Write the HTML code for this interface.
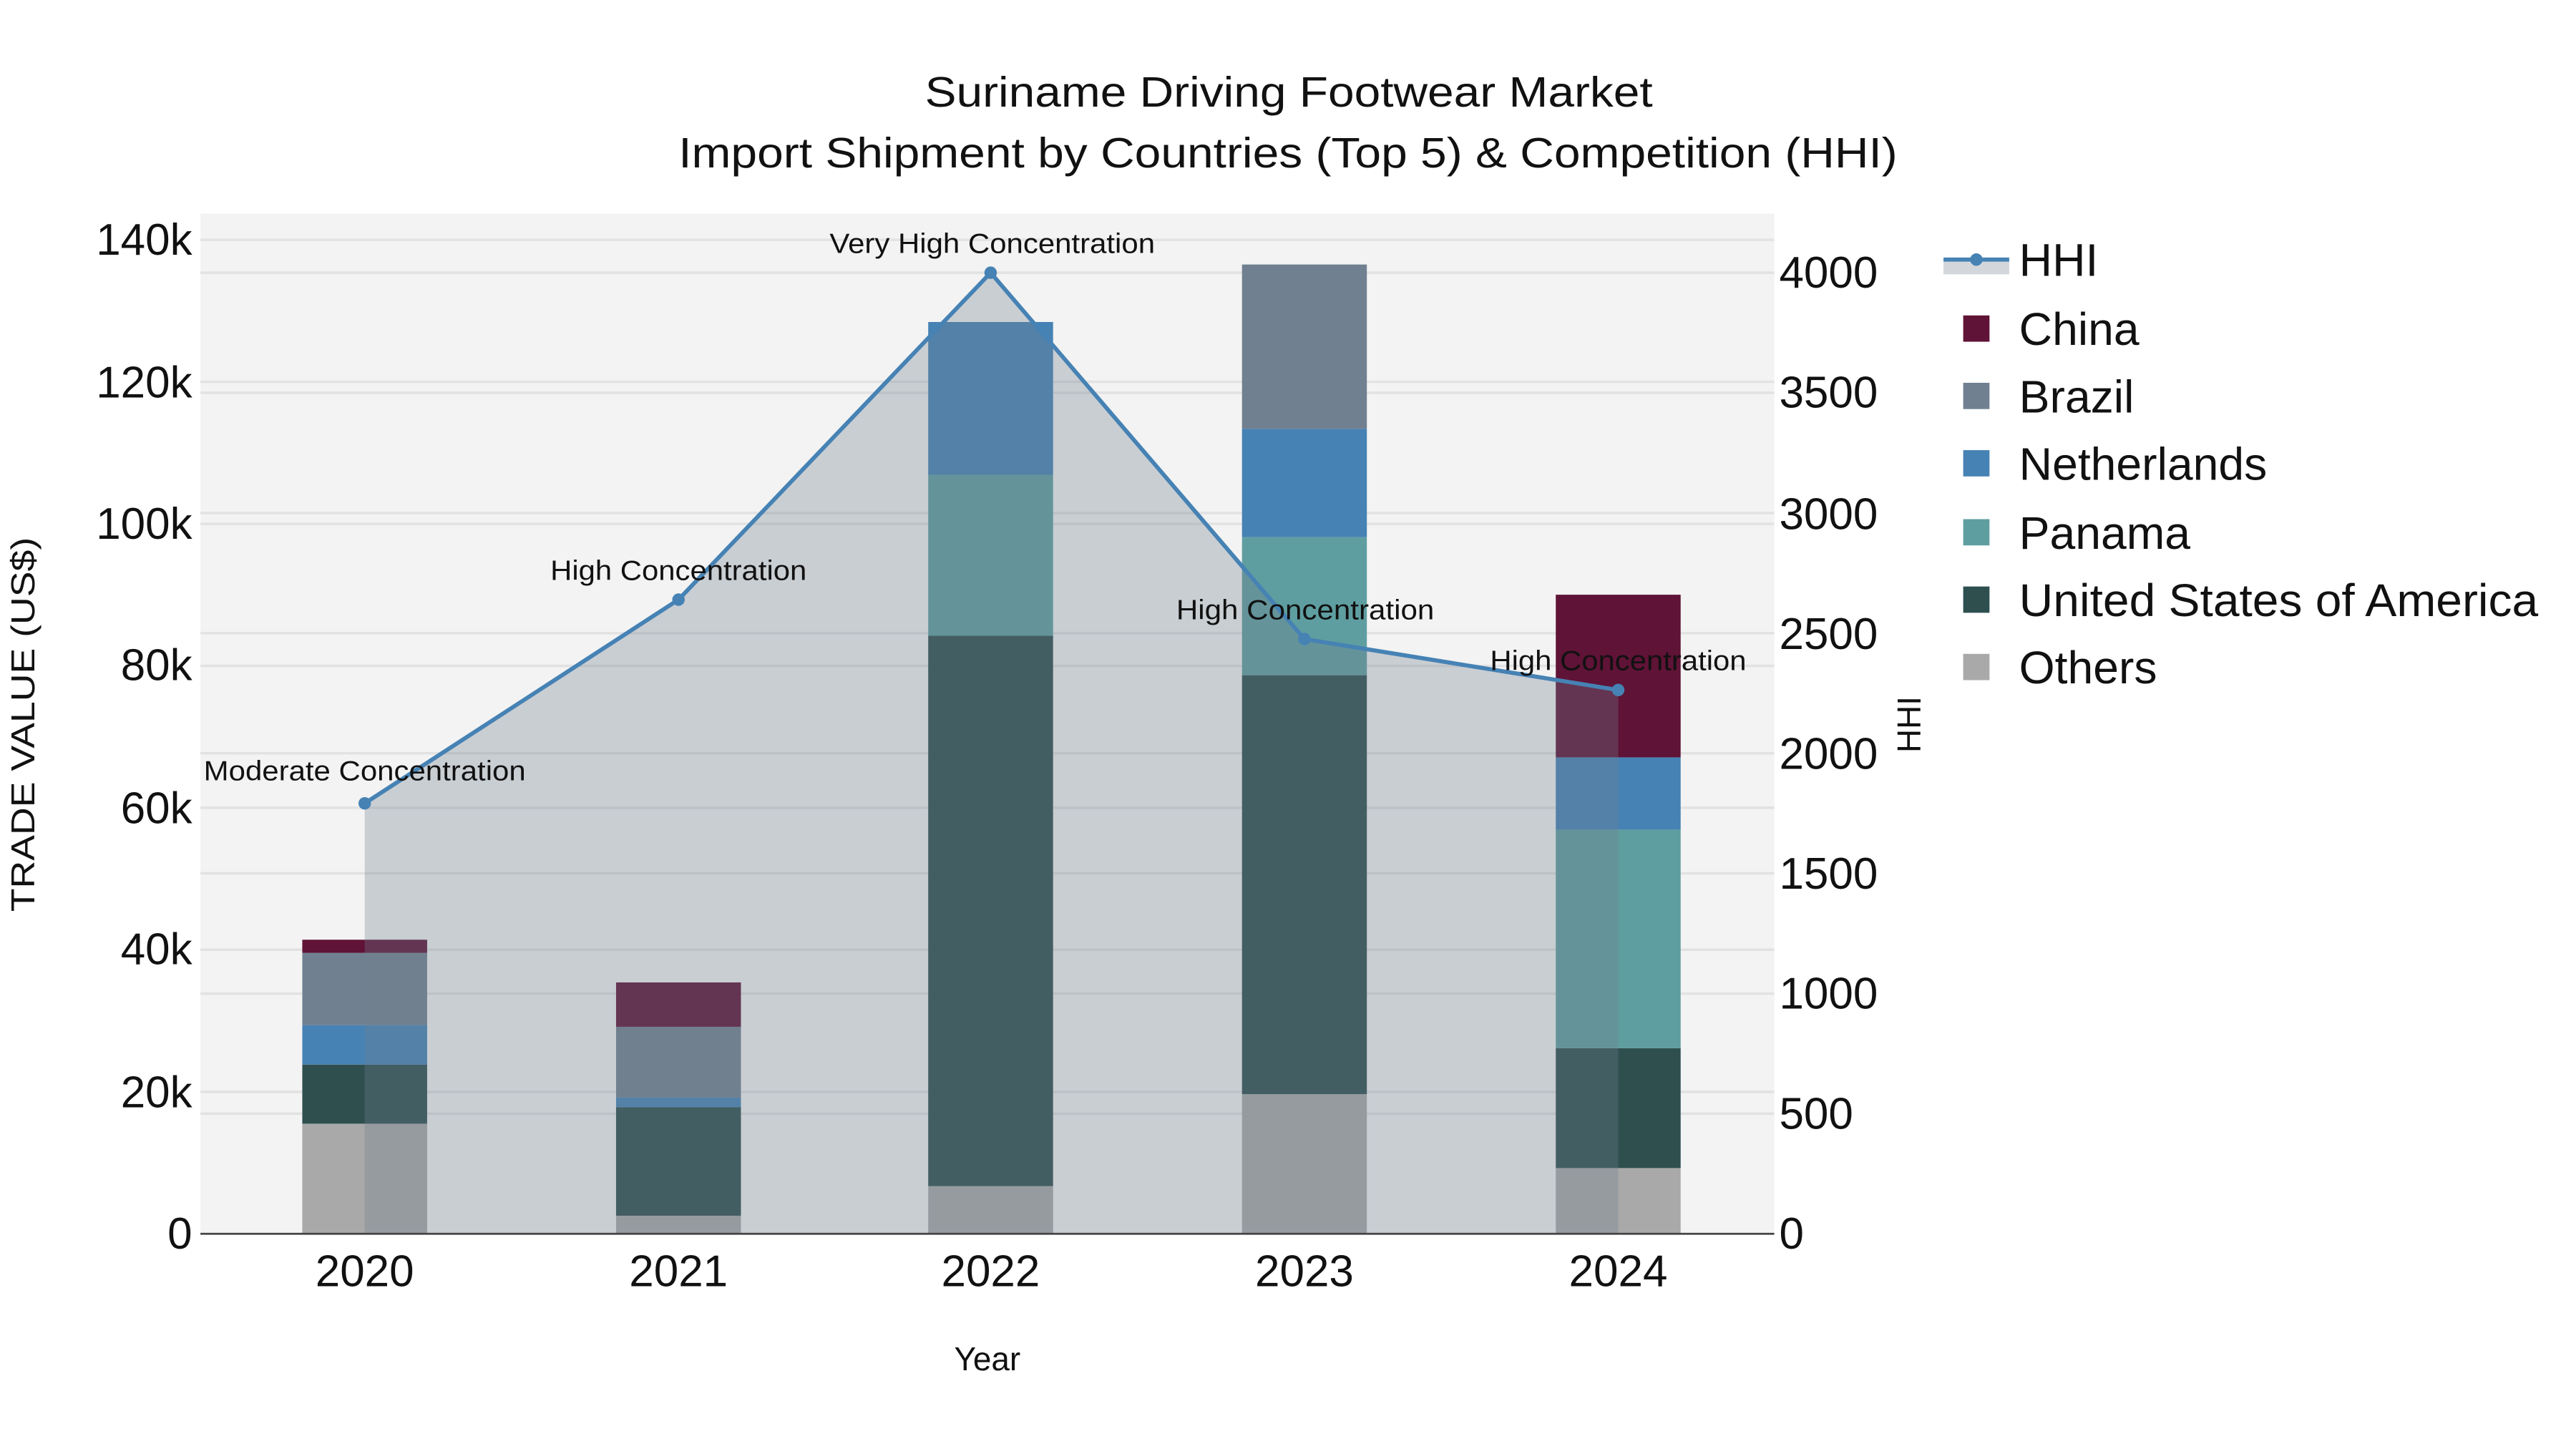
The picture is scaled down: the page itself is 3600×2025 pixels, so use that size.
<!DOCTYPE html>
<html><head><meta charset="utf-8"><style>
html,body{margin:0;padding:0;background:#fff;}
svg{display:block;}
text{font-family:"Liberation Sans",sans-serif;fill:#111;}
</style></head><body>
<svg width="3600" height="2025" viewBox="0 0 1568 882" preserveAspectRatio="none" xmlns="http://www.w3.org/2000/svg">
<rect x="0" y="0" width="1568" height="882" fill="#fff"/>
<rect x="122" y="130" width="958" height="621" fill="#f3f3f3"/>
<g stroke="#e2e2e2" stroke-width="1.5">
<line x1="122" x2="1080" y1="664.6" y2="664.6"/><line x1="122" x2="1080" y1="578.1" y2="578.1"/>
<line x1="122" x2="1080" y1="491.7" y2="491.7"/><line x1="122" x2="1080" y1="405.3" y2="405.3"/>
<line x1="122" x2="1080" y1="318.9" y2="318.9"/><line x1="122" x2="1080" y1="232.4" y2="232.4"/>
<line x1="122" x2="1080" y1="146" y2="146"/>
<line x1="122" x2="1080" y1="677.9" y2="677.9"/><line x1="122" x2="1080" y1="604.8" y2="604.8"/>
<line x1="122" x2="1080" y1="531.6" y2="531.6"/><line x1="122" x2="1080" y1="458.5" y2="458.5"/>
<line x1="122" x2="1080" y1="385.4" y2="385.4"/><line x1="122" x2="1080" y1="312.3" y2="312.3"/>
<line x1="122" x2="1080" y1="239.1" y2="239.1"/><line x1="122" x2="1080" y1="166" y2="166"/>
</g>
<g>
<rect x="184" y="684" width="76" height="67" fill="#a9a9a9"/>
<rect x="184" y="648" width="76" height="36" fill="#2f4f4f"/>
<rect x="184" y="624" width="76" height="24" fill="#4682b4"/>
<rect x="184" y="580" width="76" height="44" fill="#708090"/>
<rect x="184" y="572" width="76" height="8" fill="#5f1336"/>

<rect x="375" y="740" width="76" height="11" fill="#a9a9a9"/>
<rect x="375" y="674" width="76" height="66" fill="#2f4f4f"/>
<rect x="375" y="668" width="76" height="6" fill="#4682b4"/>
<rect x="375" y="625" width="76" height="43" fill="#708090"/>
<rect x="375" y="598" width="76" height="27" fill="#5f1336"/>

<rect x="565" y="722" width="76" height="29" fill="#a9a9a9"/>
<rect x="565" y="387" width="76" height="335" fill="#2f4f4f"/>
<rect x="565" y="289" width="76" height="98" fill="#5f9ea0"/>
<rect x="565" y="196" width="76" height="93" fill="#4682b4"/>

<rect x="756" y="666" width="76" height="85" fill="#a9a9a9"/>
<rect x="756" y="411" width="76" height="255" fill="#2f4f4f"/>
<rect x="756" y="327" width="76" height="84" fill="#5f9ea0"/>
<rect x="756" y="261" width="76" height="66" fill="#4682b4"/>
<rect x="756" y="161" width="76" height="100" fill="#708090"/>

<rect x="947" y="711" width="76" height="40" fill="#a9a9a9"/>
<rect x="947" y="638" width="76" height="73" fill="#2f4f4f"/>
<rect x="947" y="505" width="76" height="133" fill="#5f9ea0"/>
<rect x="947" y="461" width="76" height="44" fill="#4682b4"/>
<rect x="947" y="362" width="76" height="99" fill="#5f1336"/>
</g>
<polygon points="222,751 222,489 413,365 603,166 794,389 985,420 985,751" fill="rgb(112,128,144)" fill-opacity="0.32"/>
<polyline points="222,489 413,365 603,166 794,389 985,420" fill="none" stroke="#4682b4" stroke-width="2.5"/>
<g fill="#4682b4"><circle cx="222" cy="489" r="3.8"/><circle cx="413" cy="365" r="3.8"/><circle cx="603" cy="166" r="3.8"/><circle cx="794" cy="389" r="3.8"/><circle cx="985" cy="420" r="3.8"/></g>
<line x1="122" x2="1080" y1="751" y2="751" stroke="#444" stroke-width="1.2"/>
<g font-size="17">
<text x="124" y="475" textLength="196" lengthAdjust="spacingAndGlyphs">Moderate Concentration</text>
<text x="335" y="353" textLength="156" lengthAdjust="spacingAndGlyphs">High Concentration</text>
<text x="505" y="154" textLength="198" lengthAdjust="spacingAndGlyphs">Very High Concentration</text>
<text x="716" y="377" textLength="157" lengthAdjust="spacingAndGlyphs">High Concentration</text>
<text x="907" y="408" textLength="156" lengthAdjust="spacingAndGlyphs">High Concentration</text>
</g>
<g font-size="27" text-anchor="end">
<text x="117" y="760">0</text>
<text x="117" y="674">20k</text>
<text x="117" y="587">40k</text>
<text x="117" y="501">60k</text>
<text x="117" y="414">80k</text>
<text x="117" y="328">100k</text>
<text x="117" y="242">120k</text>
<text x="117" y="155">140k</text>
</g>
<g font-size="27">
<text x="1083" y="760">0</text>
<text x="1083" y="687">500</text>
<text x="1083" y="614">1000</text>
<text x="1083" y="541">1500</text>
<text x="1083" y="468">2000</text>
<text x="1083" y="395">2500</text>
<text x="1083" y="322">3000</text>
<text x="1083" y="248">3500</text>
<text x="1083" y="175">4000</text>
</g>
<g font-size="27" text-anchor="middle">
<text x="222" y="783">2020</text><text x="413" y="783">2021</text><text x="603" y="783">2022</text><text x="794" y="783">2023</text><text x="985" y="783">2024</text>
</g>
<text x="601" y="834" font-size="20" text-anchor="middle">Year</text>
<text transform="translate(21,441) rotate(-90)" font-size="20" text-anchor="middle" textLength="228" lengthAdjust="spacingAndGlyphs">TRADE VALUE (US$)</text>
<text transform="translate(1169,441) rotate(-90)" font-size="20" text-anchor="middle">HHI</text>
<text x="563" y="65" font-size="26" textLength="443" lengthAdjust="spacingAndGlyphs">Suriname Driving Footwear Market</text>
<text x="413" y="102" font-size="26" textLength="742" lengthAdjust="spacingAndGlyphs">Import Shipment by Countries (Top 5) &amp; Competition (HHI)</text>
<rect x="1183" y="158" width="40" height="9" fill="#d3d7dc"/>
<line x1="1183" x2="1223" y1="158" y2="158" stroke="#4682b4" stroke-width="2.5"/>
<circle cx="1203" cy="158" r="3.8" fill="#4682b4"/>
<rect x="1195" y="192" width="16" height="16" fill="#5f1336"/>
<rect x="1195" y="233" width="16" height="16" fill="#708090"/>
<rect x="1195" y="274" width="16" height="16" fill="#4682b4"/>
<rect x="1195" y="316" width="16" height="16" fill="#5f9ea0"/>
<rect x="1195" y="357" width="16" height="16" fill="#2f4f4f"/>
<rect x="1195" y="398" width="16" height="16" fill="#a9a9a9"/>
<g font-size="28">
<text x="1229" y="168">HHI</text>
<text x="1229" y="210">China</text>
<text x="1229" y="251">Brazil</text>
<text x="1229" y="292">Netherlands</text>
<text x="1229" y="334">Panama</text>
<text x="1229" y="375" textLength="316" lengthAdjust="spacingAndGlyphs">United States of America</text>
<text x="1229" y="416">Others</text>
</g>
</svg>
</body></html>
